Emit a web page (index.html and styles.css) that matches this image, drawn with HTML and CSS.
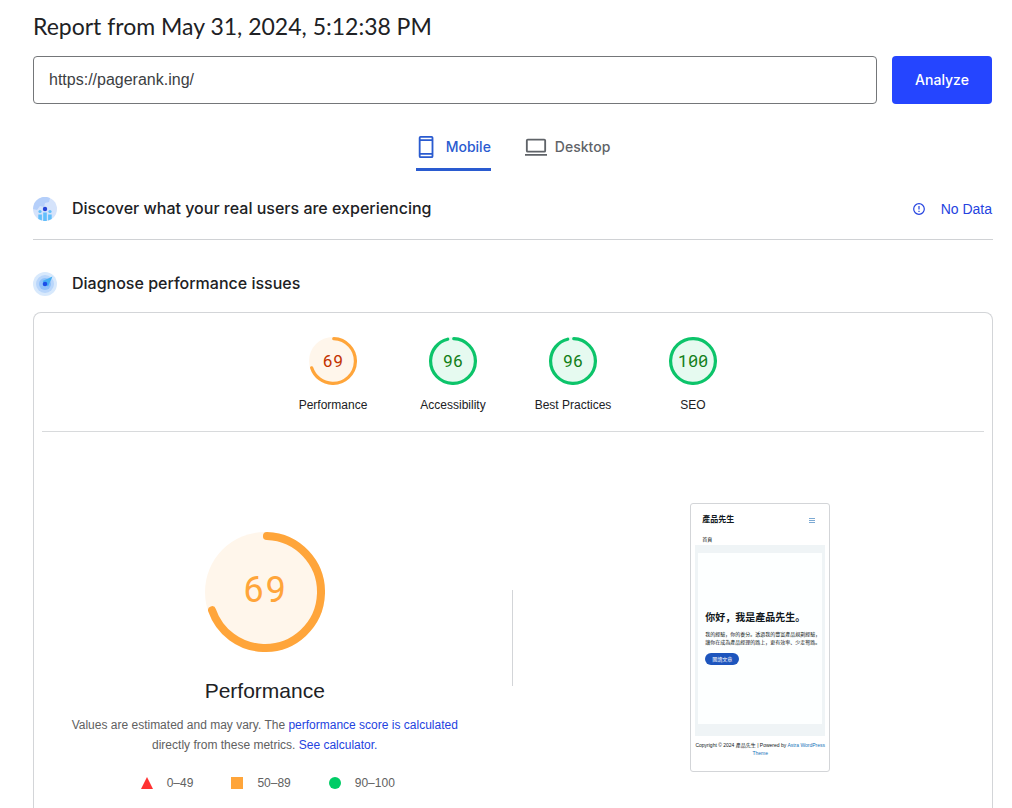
FILE: index.html
```html
<!DOCTYPE html>
<html lang="en">
<head>
<meta charset="utf-8">
<meta name="viewport" content="width=device-width, initial-scale=1">
<title>PageSpeed Insights</title>
<link rel="stylesheet" href="styles.css">
</head>
<body>
<main class="page">
  <h1 class="report-title">Report from May 31, 2024, 5:12:38&#8239;PM</h1>
  <form class="url-form">
    <input class="url-input" type="text" aria-label="Enter a web page URL" value="https://pagerank.ing/">
    <button class="analyze" type="button">Analyze</button>
  </form>

  <nav class="tabs" aria-label="Form factor">
    <button class="tab tab-active" type="button">
      <svg class="tab-icon" viewBox="0 0 24 24" aria-hidden="true"><path fill="currentColor" fill-rule="evenodd" d="M5 0h12a2 2 0 0 1 2 2v20a2 2 0 0 1-2 2H5a2 2 0 0 1-2-2V2a2 2 0 0 1 2-2zm0 2v1.500h12V2zm0 3.500v13h12v-13zm0 15V22h12v-1.500z"/></svg>
      <span>Mobile</span>
    </button>
    <button class="tab" type="button">
      <svg class="tab-icon" viewBox="0 0 24 24" aria-hidden="true"><path fill="currentColor" fill-rule="evenodd" d="M3 3h18a2 2 0 0 1 2 2v11a2 2 0 0 1-2 2H3a2 2 0 0 1-2-2V5a2 2 0 0 1 2-2zm0 2v11h18V5zM0 19.500h24v2H0z"/></svg>
      <span>Desktop</span>
    </button>
  </nav>

  <section class="section-row section-ruled">
    <svg class="section-icon" viewBox="0 0 24 24" aria-hidden="true">
      <circle cx="12" cy="12" r="12" fill="#d5e3fb"/>
      <path d="M1 7A12 12 0 0 1 17 1l-1 4-4 1-1 4-4-1-3 4-4-1z" fill="#b5cffa"/>
      <g fill="#62bffb"><circle cx="7" cy="14.500" r="1.600"/><circle cx="17" cy="14.500" r="1.600"/><path d="M5.300 17.500h3.600v6l-3.600-1.500zM15.100 17.500h3.600V22l-3.600 1.500zM10.200 15.500h3.600V24h-3.600z"/></g>
      <circle cx="12" cy="12" r="2.200" fill="#2443d8"/>
    </svg>
    <h2 class="section-title">Discover what your real users are experiencing</h2>
    <a class="no-data" href="#">
      <svg class="info-icon" viewBox="0 0 12 12" fill="none" stroke="currentColor" aria-hidden="true"><circle cx="6" cy="6" r="5.300" stroke-width="1.200"/><path d="M6 3v3.500M6 7.800V9" stroke-width="1.200"/></svg>
      <span>No Data</span>
    </a>
  </section>

  <section class="section-row">
    <svg class="section-icon" viewBox="0 0 24 24" aria-hidden="true">
      <circle cx="12" cy="12" r="12" fill="#d8e9fc"/>
      <circle cx="12" cy="12" r="9" fill="#b9d6fb"/>
      <circle cx="12" cy="12" r="6" fill="#8fc1fa"/>
      <path d="M19.500 4.500L15 14.500 9.500 9z" fill="#45aef3"/>
      <circle cx="12" cy="12" r="2.300" fill="#1c4fe8"/>
    </svg>
    <h2 class="section-title">Diagnose performance issues</h2>
  </section>

  <section class="card">
    <div class="scores">
      <a class="score average" href="#">
        <span class="dial"><svg viewBox="0 0 120 120" aria-hidden="true"><circle class="dial-base" cx="60" cy="60" r="60"/><circle class="dial-arc" cx="60" cy="60" r="56" stroke-dasharray="243 352"/></svg><span class="dial-number">69</span></span>
        <span>Performance</span>
      </a>
      <a class="score pass" href="#">
        <span class="dial"><svg viewBox="0 0 120 120" aria-hidden="true"><circle class="dial-base" cx="60" cy="60" r="60"/><circle class="dial-arc" cx="60" cy="60" r="56" stroke-dasharray="334 352"/></svg><span class="dial-number">96</span></span>
        <span>Accessibility</span>
      </a>
      <a class="score pass" href="#">
        <span class="dial"><svg viewBox="0 0 120 120" aria-hidden="true"><circle class="dial-base" cx="60" cy="60" r="60"/><circle class="dial-arc" cx="60" cy="60" r="56" stroke-dasharray="334 352"/></svg><span class="dial-number">96</span></span>
        <span>Best Practices</span>
      </a>
      <a class="score pass" href="#">
        <span class="dial"><svg viewBox="0 0 120 120" aria-hidden="true"><circle class="dial-base" cx="60" cy="60" r="60"/><circle class="dial-arc" cx="60" cy="60" r="56"/></svg><span class="dial-number">100</span></span>
        <span>SEO</span>
      </a>
    </div>

    <div class="overview">
      <div class="summary average">
        <span class="dial dial-large"><svg viewBox="0 0 120 120" aria-hidden="true"><circle class="dial-base" cx="60" cy="60" r="60"/><circle class="dial-arc" cx="60" cy="60" r="56" stroke-dasharray="243 352"/></svg><span class="dial-number">69</span></span>
        <h3 class="summary-title">Performance</h3>
        <p class="summary-text">Values are estimated and may vary. The <a href="#">performance score is calculated</a> directly from these metrics. <a href="#">See calculator.</a></p>
        <ul class="legend">
          <li><svg viewBox="0 0 12 12" aria-hidden="true"><path d="M6 0l6 12H0z" fill="#f33"/></svg>0–49</li>
          <li><svg viewBox="0 0 12 12" aria-hidden="true"><path d="M0 0h12v12H0z" fill="#ffa53a"/></svg>50–89</li>
          <li><svg viewBox="0 0 12 12" aria-hidden="true"><circle cx="6" cy="6" r="6" fill="#0c6"/></svg>90–100</li>
        </ul>
      </div>
      <div class="preview-column">
        <article class="preview" lang="zh">
          <header class="preview-header">
            <strong class="preview-brand">產品先生</strong>
            <svg class="preview-menu" viewBox="0 0 6 6" aria-hidden="true"><path d="M0 1.500h6M0 3.500h6M0 5.500h6" stroke="#5b93c8" stroke-width=".8"/></svg>
          </header>
          <div class="preview-crumb">首頁</div>
          <div class="preview-frame">
            <div class="preview-hero">
              <h4 class="preview-title">你好，我是產品先生。</h4>
              <p class="preview-text">我的經驗，你的養分。透過我的豐富產品規劃經驗，讓你在成為產品經理的路上，更有效率、少走彎路。</p>
              <a class="preview-button" href="#">閱讀文章</a>
            </div>
          </div>
          <footer class="preview-footer">Copyright © 2024 產品先生 | Powered by <a href="#">Astra WordPress Theme</a></footer>
        </article>
      </div>
    </div>
  </section>
</main>
</body>
</html>
```

FILE: styles.css
```css
* { box-sizing: border-box; }

body {
  margin: 0;
  background: #fff;
  color: #202124;
  font-family: "Liberation Sans", Arial, sans-serif;
  font-size: 12px;
}

h1, h2, h3, h4, p, ul { margin: 0; padding: 0; font-weight: 400; }

a { color: #2443e0; text-decoration: none; }

.page {
  display: flex;
  flex-direction: column;
  min-height: 100vh;
  padding: 8px 19px 0 33px;
}

.report-title {
  font-family: Lato, sans-serif;
  font-size: 23px;
  line-height: 36px;
}

.url-form {
  display: flex;
  gap: 15px;
  margin-top: 12px;
  padding-right: 1px;
}

.url-input {
  flex: 1;
  min-width: 0;
  height: 48px;
  padding: 0 15px;
  border: 1px solid #747679;
  border-radius: 4px;
  background: #fff;
  color: #3c4043;
  font-family: inherit;
  font-size: 16px;
}

.analyze {
  width: 100px;
  padding: 0 0 2px;
  border: 0;
  border-radius: 4px;
  background: #2545ff;
  color: #fff;
  font-family: Inter, sans-serif;
  font-size: 14px;
  font-weight: 500;
}

.tabs {
  display: flex;
  justify-content: center;
  gap: 34px;
  margin-top: 20px;
}

.tab {
  display: flex;
  align-items: center;
  gap: 8px;
  height: 47px;
  padding: 0 0 2px;
  border: 0;
  background: linear-gradient(currentColor, currentColor) no-repeat bottom / 0 3px;
  color: #5f6368;
  font-family: Inter, sans-serif;
  font-size: 14px;
  font-weight: 500;
}

.tab-active { background-size: 100% 3px; color: #2a5bd0; }
.tab-icon { width: 22px; height: 22px; }

.section-row {
  display: flex;
  align-items: center;
  gap: 15px;
  min-height: 57px;
}

.section-ruled {
  padding-top: 26px;
  padding-bottom: 18px;
  margin-bottom: 15px;
  border-bottom: 1px solid #d0d2d5;
}

.section-icon { width: 24px; height: 24px; }

.section-title {
  flex: 1;
  font-family: Inter, sans-serif;
  font-size: 16px;
  font-weight: 500;
  line-height: 22px;
  padding-bottom: 2px;
}

.no-data {
  display: flex;
  align-items: center;
  gap: 16px;
  padding-right: 1px;
  font-size: 14px;
}

.info-icon { width: 12px; height: 12px; }

.card {
  flex: 1;
  padding: 0 8px;
  border: 1px solid #d3d5d8;
  border-bottom: 0;
  border-radius: 8px 8px 0 0;
}

.scores {
  display: flex;
  justify-content: center;
  padding: 24px 0 18px;
  border-bottom: 1px solid #d8dadc;
}

.score {
  display: flex;
  flex-direction: column;
  align-items: center;
  gap: 12px;
  width: 120px;
  color: #202124;
  line-height: 16px;
}

.dial {
  display: grid;
  place-items: center;
  width: 48px;
  height: 48px;
  font-family: "Roboto Mono", "Liberation Mono", monospace;
  font-size: 17px;
}

.dial > * { grid-area: 1 / 1; }
.dial svg { width: 100%; height: 100%; }
.dial-large { width: 120px; height: 120px; font-size: 36px; }
.dial-large .dial-number { padding-bottom: 8px; }

.dial-arc {
  fill: none;
  stroke-width: 8;
  stroke-linecap: round;
  transform: rotate(-88deg);
  transform-origin: center;
}

.average .dial-base { fill: #fff6eb; }
.average .dial-arc { stroke: #ffa53a; }
.average .dial-number { color: #c33300; }
.average .dial-large .dial-number { color: #ffa53a; }
.pass .dial-base { fill: #e6faf0; }
.pass .dial-arc { stroke: #0cc46a; }
.pass .dial-number { color: #128019; }

.overview {
  display: grid;
  grid-template-columns: 1fr 1px 1fr;
  align-items: start;
  padding: 71px 2px 0 0;
}

.overview::before {
  content: "";
  grid-area: 1 / 2;
  height: 96px;
  margin-top: 87px;
  background: #d3d5d8;
}

.summary {
  grid-area: 1 / 1;
  display: flex;
  flex-direction: column;
  align-items: center;
  padding: 29px 24px 0 0;
}

.summary-title {
  margin-top: 25px;
  font-size: 21px;
  line-height: 28px;
}

.summary-text {
  max-width: 400px;
  margin-top: 10px;
  color: #616161;
  line-height: 20px;
  text-align: center;
}

.legend {
  display: flex;
  gap: 38px;
  margin-top: 20px;
  padding-left: 6px;
  color: #616161;
  line-height: 16px;
  list-style: none;
}

.legend li { display: flex; align-items: center; gap: 14px; }
.legend svg { width: 12px; height: 12px; }

.preview-column {
  grid-area: 1 / 3;
  display: flex;
  justify-content: center;
  padding-left: 26px;
}

.preview {
  width: 140px;
  padding: 10px 4px 14px;
  border: 1px solid #d3d5d8;
  border-radius: 3px;
  font-family: "Liberation Sans", "Noto Sans CJK SC", sans-serif;
  color: #111820;
}

.preview-header {
  display: flex;
  align-items: center;
  justify-content: space-between;
  padding: 0 10px 0 7px;
}

.preview-brand { font-size: 8px; line-height: 12px; }
.preview-menu { width: 6px; height: 6px; }

.preview-crumb {
  padding-left: 7px;
  margin-top: 9px;
  font-size: 5px;
  line-height: 8px;
}

.preview-frame {
  margin-top: 2px;
  padding: 8px 3px 12px;
  background: #eff4f6;
}

.preview-hero {
  min-height: 171px;
  padding: 58px 0 0 7px;
  background: #fdffff;
}

.preview-title { font-size: 10px; font-weight: 700; line-height: 14px; white-space: nowrap; }
.preview-text { margin: 5px 0 7px; font-size: 5px; line-height: 8px; }

.preview-button {
  display: block;
  width: fit-content;
  padding: 0 7px;
  border-radius: 6px;
  background: #1d55bd;
  color: #fff;
  font-size: 5px;
  line-height: 12px;
}

.preview-footer {
  margin-top: 5px;
  font-size: 5px;
  line-height: 8px;
  text-align: center;
}

.preview-footer a { color: #1674ba; }
```
